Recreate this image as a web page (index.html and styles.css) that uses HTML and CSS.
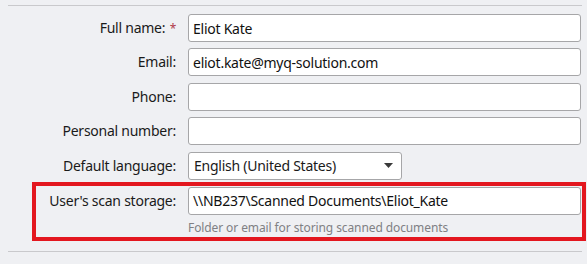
FILE: index.html
```html
<!DOCTYPE html>
<html>
<head>
<meta charset="utf-8">
<link rel="stylesheet" href="styles.css">
</head>
<body>
<div class="panel">
  <hr class="rule rule-top">
  <form class="form">
    <label class="label">Full name: <span class="req">*</span></label>
    <div class="field"><input class="input" type="text" value="Eliot Kate"></div>

    <label class="label">Email:</label>
    <div class="field"><input class="input" type="text" value="eliot.kate@myq-solution.com"></div>

    <label class="label">Phone:</label>
    <div class="field"><input class="input" type="text" value=""></div>

    <label class="label">Personal number:</label>
    <div class="field"><input class="input" type="text" value=""></div>

    <label class="label">Default language:</label>
    <div class="field">
      <div class="select">
        <span class="select-text">English (United States)</span>
        <svg class="caret" width="9" height="5" viewBox="0 0 9 5"><path d="M0 0 H9 L4.5 5 Z" fill="#3a3a3a"/></svg>
      </div>
    </div>

    <div class="highlight">
      <label class="label">User's scan storage:</label>
      <div class="field"><input class="input" type="text" value="\\NB237\Scanned Documents\Eliot_Kate"></div>
      <div></div>
      <div class="help">Folder or email for storing scanned documents</div>
    </div>
  </form>
  <hr class="rule rule-bottom">
</div>
</body>
</html>
```

FILE: styles.css
```css
* { box-sizing: border-box; }
html, body {
  margin: 0;
  padding: 0;
  background: #eff0f3;
  font-family: "Noto Sans", "Open Sans", sans-serif;
  font-size: 14px;
  letter-spacing: -0.25px;
  color: #1a1a1a;
}
.panel {
  width: 587px;
  height: 264px;
  padding: 5px 5px 0 8px;
}
.rule {
  margin: 0;
  border: 0;
  height: 1px;
  background: #c9c9cc;
  width: 574px;
}
.form {
  display: grid;
  grid-template-columns: 168px 393px;
  column-gap: 12px;
  row-gap: 6.4px;
  margin-top: 8px;
  align-items: center;
}
.label {
  text-align: right;
  white-space: nowrap;
  color: #1a1a1a;
  line-height: 28px;
  height: 28px;
}
.req {
  color: #b03a4a;
  font-size: 12px;
  margin-left: 1px;
}
.field { height: 28px; }
.input {
  width: 100%;
  height: 28px;
  border: 1px solid #a6a6a8;
  border-radius: 3px;
  background: #fff;
  font-family: inherit;
  font-size: 14px;
  letter-spacing: -0.25px;
  color: #111;
  padding: 0 4px;
  outline: none;
}
.select {
  width: 214px;
  height: 28px;
  border: 1px solid #a6a6a8;
  border-radius: 3px;
  background: #fff;
  display: flex;
  align-items: center;
  justify-content: space-between;
  padding: 0 8px 0 5px;
}
.select-text { white-space: nowrap; }
.caret { display: block; }
.highlight {
  grid-column: 1 / -1;
  display: grid;
  grid-template-columns: 140px 393px;
  column-gap: 12px;
  align-items: center;
  margin-left: 28px;
  margin-right: -1px;
  outline: 4px solid #e3171f;
  outline-offset: 0;
  padding-top: 1px;
}
.help {
  font-size: 12px;
  letter-spacing: -0.1px;
  color: #808084;
  line-height: 16px;
  padding: 5px 0 1px 0;
}
.rule-bottom { margin-top: 14px; }
```
